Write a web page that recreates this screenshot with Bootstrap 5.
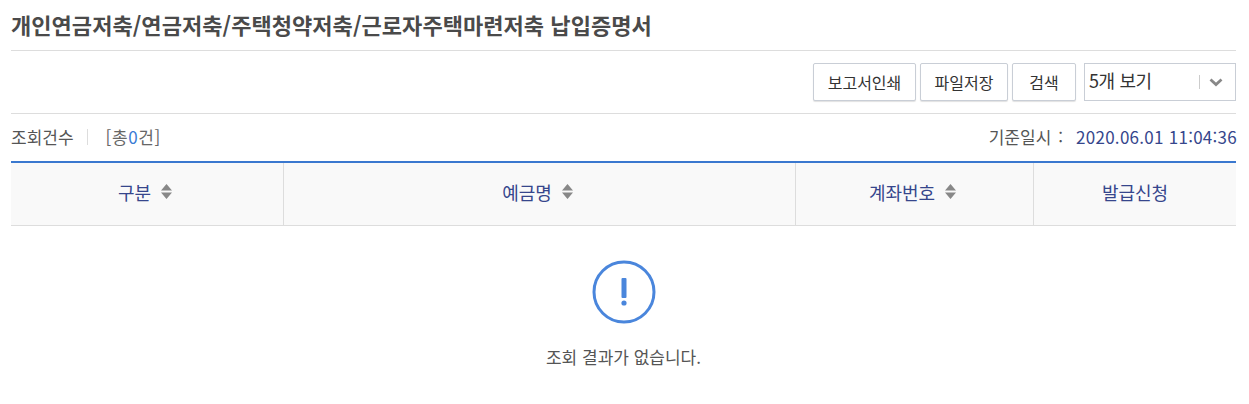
<!DOCTYPE html>
<html lang="ko">
<head>
    <meta charset="UTF-8">
    <meta name="viewport" content="width=device-width, initial-scale=1.0">
    <title>납입증명서</title>
    <link href="https://cdn.jsdelivr.net/npm/bootstrap@5.3.0/dist/css/bootstrap.min.css" rel="stylesheet">
    <style>
        body { font-family: "Noto Sans CJK KR", "Noto Sans", sans-serif; font-size: 17px; color: #555; background: #fff; }
        .page-wrap { width: 1225px; margin-left: 11px; }
        .page-title { height: 51px; margin: 0; padding-top: 9px; font-size: 22px; line-height: 30px; font-weight: 700; color: #4a4a4a; border-bottom: 1px solid #ddd; letter-spacing: .05px; }
        .tool-row { height: 63px; padding-top: 12px; border-bottom: 1px solid #ddd; gap: 4px; }
        .tool-btn { height: 38px; padding: 0; font-size: 16px; color: #333; background: #fff; border: 1px solid #c9ced6; border-radius: 2px; box-shadow: 0 1px 1px rgba(0,0,0,.12); }
        .tool-pick { width: 152px; height: 38px; margin-left: 4px; padding-left: 4px; border: 1px solid #c9ced6; font-size: 18px; color: #333; }
        .tool-pick span { padding-bottom: 3px; letter-spacing: -.4px; }
        .tool-pick i { display: block; width: 1px; height: 14px; background: #ccc; margin-right: 9px; }
        .info-row { height: 47px; padding-bottom: 2px; font-size: 17px; }
        .info-sep { width: 1px; height: 16px; background: #ddd; margin: 0 18px 0 13px; }
        .info-count { color: #666; letter-spacing: .6px; }
        .info-count b { font-weight: 400; color: #3a7bd5; }
        .info-colon { margin: 0 13px 0 7px; }
        .info-date { color: #36468c; letter-spacing: .27px; margin-right: -1px; }
        .grid-head { height: 65px; background: #f9f9f9; border-top: 2px solid #3a78cf; border-bottom: 1px solid #ddd; font-size: 18px; color: #36468c; }
        .grid-head > div { height: 100%; gap: 10px; padding-bottom: 3px; }
        .grid-head > div + div { border-left: 1px solid #ddd; }
        .grid-head svg { margin-bottom: 2px; }
        .has-sort { padding-right: 4px; }
        .w-gubun { width: 272px; }
        .w-name { width: 512px; }
        .w-acct { width: 238px; }
        .w-issue { width: 203px; }
        .empty-box { padding-top: 34px; font-size: 17px; color: #555; }
        .empty-box p { margin: 21px 0 0; line-height: 24px; }
    </style>
</head>
<body>
    <div class="page-wrap">
        <h1 class="page-title">개인연금저축/연금저축/주택청약저축/근로자주택마련저축 납입증명서</h1>

        <div class="tool-row d-flex justify-content-end align-items-start">
            <button type="button" class="tool-btn" style="width:103px">보고서인쇄</button>
            <button type="button" class="tool-btn" style="width:88px">파일저장</button>
            <button type="button" class="tool-btn" style="width:64px">검색</button>
            <div class="tool-pick d-flex align-items-center">
                <span class="flex-grow-1">5개 보기</span>
                <i></i>
                <svg width="14" height="9" viewBox="0 0 14 9" style="margin-right:12px"><path d="M1.5 1.5 7 6.500l5.500-5" fill="none" stroke="#888" stroke-width="2.800"/></svg>
            </div>
        </div>

        <div class="info-row d-flex align-items-center">
            <span>조회건수</span>
            <span class="info-sep"></span>
            <span class="info-count">[총<b>0</b>건]</span>
            <span class="ms-auto">기준일시</span>
            <span class="info-colon">:</span>
            <span class="info-date">2020.06.01 11:04:36</span>
        </div>

        <div class="grid-head d-flex">
            <div class="w-gubun has-sort d-flex align-items-center justify-content-center"><span>구분</span>
                <svg width="11" height="15" viewBox="0 0 11 15"><path d="M5.500 0 11 6.500H0zM0 8.500h11L5.500 15z" fill="#888"/></svg></div>
            <div class="w-name has-sort d-flex align-items-center justify-content-center"><span>예금명</span>
                <svg width="11" height="15" viewBox="0 0 11 15"><path d="M5.500 0 11 6.500H0zM0 8.500h11L5.500 15z" fill="#888"/></svg></div>
            <div class="w-acct has-sort d-flex align-items-center justify-content-center"><span>계좌번호</span>
                <svg width="11" height="15" viewBox="0 0 11 15"><path d="M5.500 0 11 6.500H0zM0 8.500h11L5.500 15z" fill="#888"/></svg></div>
            <div class="w-issue d-flex align-items-center justify-content-center"><span>발급신청</span></div>
        </div>

        <div class="empty-box text-center">
            <svg width="64" height="64" viewBox="0 0 64 64" class="d-block mx-auto">
                <circle cx="32" cy="32" r="30" fill="none" stroke="#4a86dc" stroke-width="3"/>
                <rect x="29.500" y="18" width="5" height="20" rx="1" fill="#4a86dc"/>
                <circle cx="32" cy="43" r="2.600" fill="#4a86dc"/>
            </svg>
            <p>조회 결과가 없습니다.</p>
        </div>
    </div>

    <script src="https://cdn.jsdelivr.net/npm/bootstrap@5.3.0/dist/js/bootstrap.bundle.min.js"></script>
</body>
</html>
